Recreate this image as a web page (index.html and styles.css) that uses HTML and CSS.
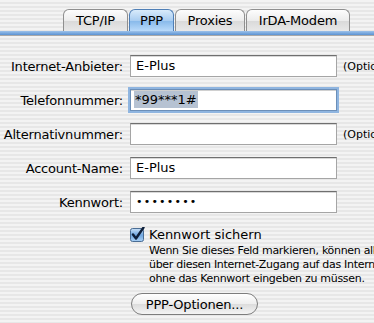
FILE: index.html
```html
<!DOCTYPE html>
<html>
    <head>
        <meta charset="utf-8">
        <title>Netzwerk: PPP</title>
        <link rel="stylesheet" href="styles.css">
    </head>
    <body>
        <div id="tabs">
            <div class="tab w-tcp">TCP/IP</div>
            <div class="tab w-ppp selected">PPP</div>
            <div class="tab w-proxies">Proxies</div>
            <div class="tab w-irda">IrDA-Modem</div>
        </div>
        <div id="rule"></div>

        <div id="form">
            <div class="row">
                <label>Internet-Anbieter:</label>
                <div class="field">E-Plus</div>
                <span class="opt">(Optional)</span>
            </div>
            <div class="row">
                <label>Telefonnummer:</label>
                <div class="field focused"><span class="sel">*99***1#</span></div>
            </div>
            <div class="row">
                <label>Alternativnummer:</label>
                <div class="field"></div>
                <span class="opt">(Optional)</span>
            </div>
            <div class="row">
                <label>Account-Name:</label>
                <div class="field">E-Plus</div>
            </div>
            <div class="row">
                <label>Kennwort:</label>
                <div class="field dots">&bull;&bull;&bull;&bull;&bull;&bull;&bull;&bull;</div>
            </div>
        </div>

        <div id="save">
            <div class="check-line">
                <svg class="checkbox" width="15" height="15" viewBox="0 0 15 15">
                    <defs>
                        <linearGradient id="cbg" x1="0" y1="0" x2="0" y2="1">
                            <stop offset="0" stop-color="#c9e0f7"/>
                            <stop offset="0.5" stop-color="#6fa6e0"/>
                            <stop offset="1" stop-color="#a9d0f5"/>
                        </linearGradient>
                    </defs>
                    <rect x="0.5" y="1.5" width="13" height="13" rx="2" fill="url(#cbg)" stroke="#4a6d94"/>
                    <path d="M3 7.5 L6 11.5 L13.5 0.5" fill="none" stroke="#0d1f3a" stroke-width="2.4" stroke-linecap="round" stroke-linejoin="round"/>
                </svg>
                <span>Kennwort sichern</span>
            </div>
            <div class="desc">
                Wenn Sie dieses Feld markieren, können alle Benutzer<br>
                über diesen Internet-Zugang auf das Internet zugreifen,<br>
                ohne das Kennwort eingeben zu müssen.
            </div>
            <button class="pill">PPP-Optionen...</button>
        </div>
    </body>
</html>
```

FILE: styles.css
```css
html, body {
    height: 100%;
}
body {
    margin: 0;
    width: 374px;
    height: 323px;
    overflow: hidden;
    white-space: nowrap;
    font-family: "DejaVu Sans", Verdana, sans-serif;
    font-size: 13px;
    color: #000;
    background: repeating-linear-gradient(to bottom, #f3f3f3 0, #f3f3f3 2px, #e7e7e7 2px, #e7e7e7 4px);
}

#tabs {
    display: flex;
    gap: 1px;
    padding: 9px 0 0 63px;
    height: 22px;
}

.tab {
    box-sizing: border-box;
    height: 22px;
    border: 1px solid #8f8f8f;
    border-bottom: none;
    border-radius: 6px 6px 0 0;
    background: linear-gradient(to bottom, #fdfdfd 0%, #ececec 50%, #d9d9d9 51%, #e8e8e8 100%);
    text-align: center;
    line-height: 21px;
    letter-spacing: -0.2px;
}
.tab.selected {
    border-color: #4f7fb6;
    background: linear-gradient(to bottom, #d9ebfb 0%, #a9cdf1 50%, #86b8ea 51%, #b9dafa 100%);
}
.w-tcp { width: 65px; }
.w-ppp { width: 45px; }
.w-proxies { width: 70px; }
.w-irda { width: 104px; }

#rule {
    height: 4px;
    background: linear-gradient(to bottom, #9dc2ea, #5b93d3);
    border-bottom: 1px solid #a8a8a8;
}

#form {
    display: flex;
    flex-direction: column;
    gap: 12px;
    padding-top: 19px;
}

.row {
    display: grid;
    grid-template-columns: 123px 207px 1fr;
    column-gap: 7px;
    align-items: center;
    height: 22px;
}
.row label {
    text-align: right;
    letter-spacing: -0.2px;
}

.field {
    box-sizing: border-box;
    height: 22px;
    background: #fff;
    border: 1px solid #a5a5a5;
    border-top-color: #6f6f6f;
    box-shadow: inset 0 1px 0 #d8d8d8;
    padding: 0 0 0 5px;
    line-height: 20px;
    overflow: hidden;
}
.field.focused {
    border-color: #6c8fb8;
    box-shadow: 0 0 0 2px #8fb5e0, inset 0 1px 0 #d0d0d0;
    padding-left: 3px;
}
.sel {
    background: #b6c2d2;
    padding: 1px 1px;
}
.dots {
    font-size: 11px;
    letter-spacing: 1.2px;
}

.opt {
    font-size: 11px;
    margin-left: -1px;
    overflow: hidden;
}

#save {
    padding: 13px 0 0 130px;
    overflow: hidden;
}

.check-line {
    display: flex;
    align-items: center;
    gap: 4px;
    height: 16px;
}
.checkbox {
    display: block;
}

.desc {
    font-size: 11px;
    line-height: 14px;
    letter-spacing: -0.3px;
    padding: 2px 0 0 19px;
    overflow: hidden;
}

.pill {
    display: block;
    margin: 7px 0 0 1px;
    width: 127px;
    height: 22px;
    padding: 0;
    border: 1px solid #7d7d7d;
    border-radius: 11px;
    background: linear-gradient(to bottom, #ffffff 0%, #eeeeee 50%, #dcdcdc 51%, #f4f4f4 100%);
    font-family: "DejaVu Sans", Verdana, sans-serif;
    font-size: 13px;
    color: #000;
    letter-spacing: -0.2px;
}
```
